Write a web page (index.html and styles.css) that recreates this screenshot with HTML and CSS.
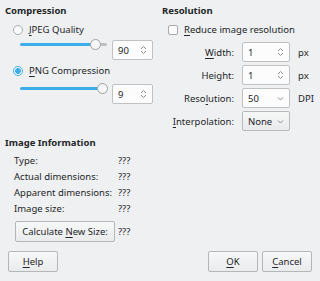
FILE: index.html
```html
<!DOCTYPE html>
<html>
<head>
<meta charset="utf-8">
<link rel="stylesheet" href="styles.css">
</head>
<body>
<div class="dialog">
  <div class="top">
    <div class="col-left">
      <div class="h">Compression</div>
      <div class="radio-row r1"><span class="radio"></span><span><u>J</u>PEG Quality</span></div>
      <div class="slider-row s1">
        <div class="slider">
          <div class="fill" style="width:75px"></div>
          <div class="groove"></div>
          <div class="handle" style="left:70px"></div>
        </div>
        <div class="spin"><span class="val">90</span><svg class="arrows" width="7" height="10" viewBox="0 0 7 10"><path d="M1 4 L3.5 1.5 L6 4 M1 6 L3.5 8.5 L6 6" fill="none" stroke="#8c8f92" stroke-width="1"/></svg></div>
      </div>
      <div class="radio-row r2"><span class="radio on"></span><span><u>P</u>NG Compression</span></div>
      <div class="slider-row s2">
        <div class="slider">
          <div class="fill" style="width:82px"></div>
          <div class="handle" style="left:77px"></div>
        </div>
        <div class="spin"><span class="val">9</span><svg class="arrows" width="7" height="10" viewBox="0 0 7 10"><path d="M1 4 L3.5 1.5 L6 4 M1 6 L3.5 8.5 L6 6" fill="none" stroke="#8c8f92" stroke-width="1"/></svg></div>
      </div>
    </div>
    <div class="col-right">
      <div class="h">Resolution</div>
      <div class="check-row"><span class="check"></span><span><u>R</u>educe image resolution</span></div>
      <div class="form">
        <span class="lbl"><u>W</u>idth:</span>
        <div class="spin"><span class="val">1</span><svg class="arrows" width="7" height="10" viewBox="0 0 7 10"><path d="M1 4 L3.5 1.5 L6 4 M1 6 L3.5 8.5 L6 6" fill="none" stroke="#8c8f92" stroke-width="1"/></svg></div>
        <span class="unit">px</span>
        <span class="lbl">Height:</span>
        <div class="spin"><span class="val">1</span><svg class="arrows" width="7" height="10" viewBox="0 0 7 10"><path d="M1 4 L3.5 1.5 L6 4 M1 6 L3.5 8.5 L6 6" fill="none" stroke="#8c8f92" stroke-width="1"/></svg></div>
        <span class="unit">px</span>
        <span class="lbl">Reso<u>l</u>ution:</span>
        <div class="spin"><span class="val">50</span><svg class="arrow" width="7" height="5" viewBox="0 0 7 5"><path d="M1 1.5 L3.5 4 L6 1.5" fill="none" stroke="#8c8f92" stroke-width="1"/></svg></div>
        <span class="unit">DPI</span>
        <span class="lbl"><u>I</u>nterpolation:</span>
        <div class="combo"><span class="val">None</span><svg class="arrow" width="7" height="5" viewBox="0 0 7 5"><path d="M1 1.5 L3.5 4 L6 1.5" fill="none" stroke="#8c8f92" stroke-width="1"/></svg></div>
        <span class="unit"></span>
      </div>
    </div>
  </div>
  <div class="info">
    <div class="h">Image Information</div>
    <div class="info-grid">
      <span>Type:</span><span>???</span>
      <span>Actual dimensions:</span><span>???</span>
      <span>Apparent dimensions:</span><span>???</span>
      <span>Image size:</span><span>???</span>
    </div>
    <div class="calc-row"><button class="btn calc">Calculate <u>N</u>ew Size:</button><span>???</span></div>
  </div>
  <div class="spacer"></div>
  <div class="bottom">
    <button class="btn"><u>H</u>elp</button>
    <div class="right-btns">
      <button class="btn"><u>O</u>K</button>
      <button class="btn"><u>C</u>ancel</button>
    </div>
  </div>
</div>
</body>
</html>
```

FILE: styles.css
```css
* { box-sizing: border-box; }
body {
  margin: 0;
  width: 320px;
  height: 281px;
  overflow: hidden;
  background: #eff0f1;
  font-family: "Noto Sans", sans-serif;
  font-size: 9.5px;
  color: #232629;
}
u { text-decoration-thickness: 1px; text-underline-offset: 1.5px; }
.dialog {
  height: 281px;
  display: flex;
  flex-direction: column;
  padding: 4px 8px 9px 5px;
}
.top { display: grid; grid-template-columns: 157px 1fr; }
.h { font-weight: bold; line-height: 13px; }

.radio-row, .check-row {
  display: flex;
  align-items: center;
  gap: 6px;
  height: 16px;
  line-height: 16px;
  padding-left: 8px;
}
.r1 { margin-top: 5px; }
.r2 { margin-top: 3px; }
.radio {
  width: 10px; height: 10px;
  border-radius: 50%;
  border: 1px solid #a7a9ab;
  background: #fcfcfc;
}
.radio.on {
  border-color: #3daee9;
  background: radial-gradient(circle, #3daee9 0 2.6px, #fcfcfc 3.2px);
}
.slider-row { display: flex; align-items: flex-start; padding-left: 15px; }
.s1 { margin-top: 2px; }
.s2 { margin-top: 5px; }
.slider { position: relative; width: 87px; height: 10px; margin-top: -1px; }
.fill {
  position: absolute; left: 0; top: 4px; height: 3px;
  background: #3daee9; border-radius: 2px;
}
.groove {
  position: absolute; right: 0; top: 4px; height: 3px; width: 14px;
  background: #bdbfc1; border-radius: 2px;
}
.handle {
  position: absolute; top: 0;
  width: 11px; height: 11px; border-radius: 50%;
  background: #f8f8f8; border: 1px solid #9fa1a3;
}
.spin, .combo {
  display: flex;
  align-items: center;
  justify-content: space-between;
  height: 20px;
  border: 1px solid #bfc1c3;
  border-radius: 2px;
  background: #fcfcfc;
  padding: 0 5px 0 5px;
}
.slider-row .spin { width: 41px; margin-left: 5px; }
.combo {
  background: linear-gradient(#f6f7f7, #e9eaeb);
  border-color: #b7b9bb;
}

.check-row { margin-top: 5px; padding-left: 6px; }
.check {
  width: 10px; height: 10px;
  border: 1px solid #a7a9ab;
  border-radius: 2px;
  background: #fcfcfc;
}
.form {
  display: grid;
  grid-template-columns: 72px 48px auto;
  column-gap: 8px;
  row-gap: 3px;
  margin-top: 4px;
  align-items: center;
}
.lbl { text-align: right; }

.info { margin-top: 5px; }
.info-grid {
  display: grid;
  grid-template-columns: 104px auto;
  padding-left: 9px;
  margin-top: 4px;
  line-height: 16px;
}
.calc-row { display: flex; align-items: center; gap: 3px; padding-left: 10px; margin-top: 4px; }
.btn {
  font: inherit;
  color: #232629;
  height: 21px;
  border: 1px solid #b4b6b8;
  border-radius: 2px;
  background: linear-gradient(#f7f8f8, #eaebec);
  padding: 0;
  width: 50px;
}
.calc { width: 100px; }
.spacer { flex: 1; }
.bottom { display: flex; justify-content: space-between; padding-left: 3px; }
.right-btns { display: flex; gap: 4px; }
```
